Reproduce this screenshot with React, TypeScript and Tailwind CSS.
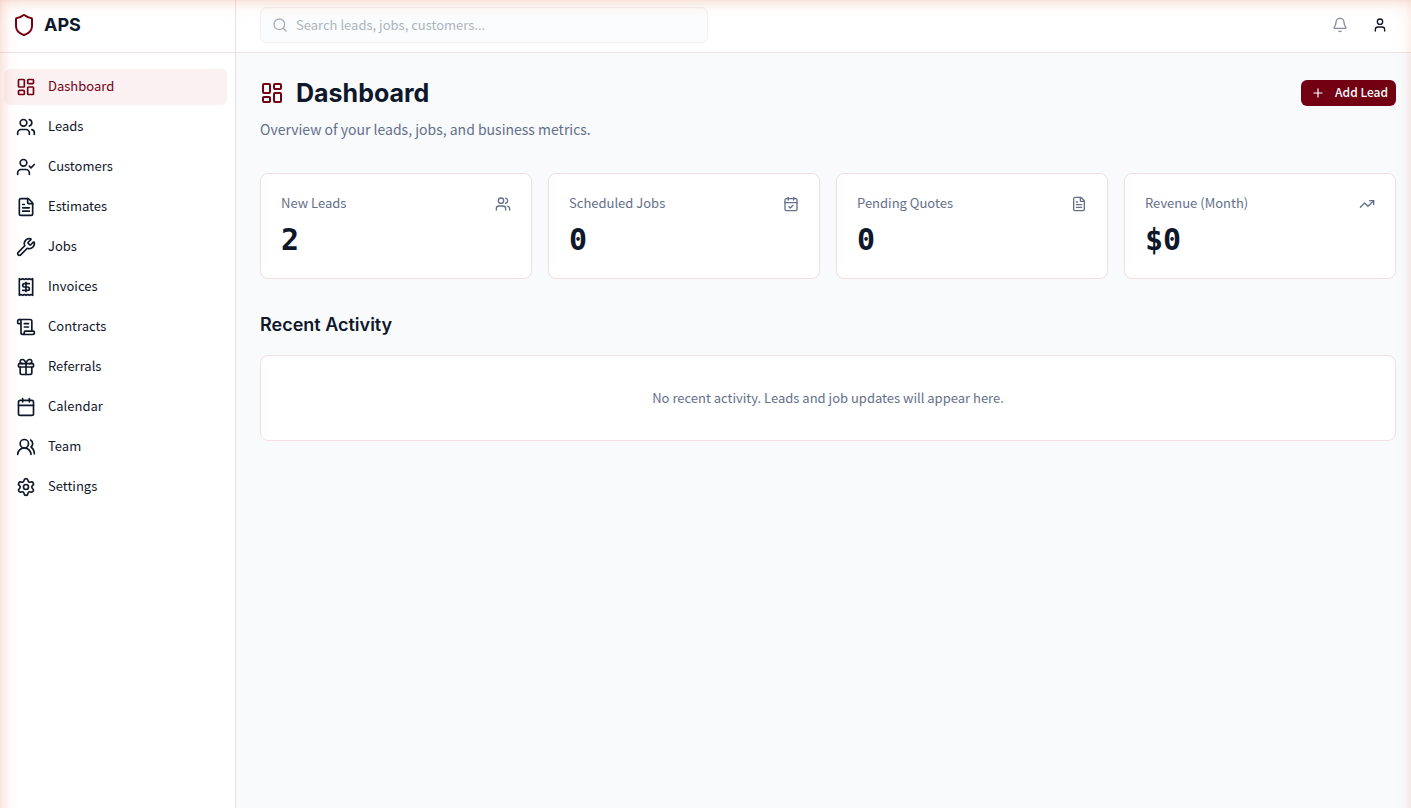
import {
  Bell,
  Calendar,
  CalendarCheck,
  FileText,
  Gift,
  LayoutDashboard,
  Plus,
  Receipt,
  ScrollText,
  Search,
  Settings,
  Shield,
  TrendingUp,
  User,
  UserCheck,
  Users,
  UsersRound,
  Wrench,
  type LucideIcon,
} from "lucide-react"
import clsx from "clsx"

type IconEntry = { label: string; icon: LucideIcon }

const navItems: IconEntry[] = [
  { label: "Dashboard", icon: LayoutDashboard },
  { label: "Leads", icon: Users },
  { label: "Customers", icon: UserCheck },
  { label: "Estimates", icon: FileText },
  { label: "Jobs", icon: Wrench },
  { label: "Invoices", icon: Receipt },
  { label: "Contracts", icon: ScrollText },
  { label: "Referrals", icon: Gift },
  { label: "Calendar", icon: Calendar },
  { label: "Team", icon: UsersRound },
  { label: "Settings", icon: Settings },
]

const stats: (IconEntry & { value: string })[] = [
  { label: "New Leads", value: "2", icon: Users },
  { label: "Scheduled Jobs", value: "0", icon: CalendarCheck },
  { label: "Pending Quotes", value: "0", icon: FileText },
  { label: "Revenue (Month)", value: "$0", icon: TrendingUp },
]

const Sidebar = () => (
  <aside className="flex w-[236px] shrink-0 flex-col border-r border-[#f0e0e2] bg-white">
    <div className="flex h-[53px] items-center gap-2 border-b border-[#f3dfe1] px-3 pb-0.5">
      <Shield className="size-6 text-[#730012]" />
      <span className="font-[Inter,sans-serif] text-lg font-bold">APS</span>
    </div>
    <nav className="flex flex-col gap-1 pt-4 pr-2 pl-1" aria-label="Main">
      {navItems.map(({ label, icon: Icon }, index) => (
        <a
          key={label}
          href="#"
          aria-current={index === 0 ? "page" : undefined}
          className={clsx(
            "flex h-9 items-center gap-3 rounded-md px-3 text-[13px] leading-5",
            index === 0 ? "bg-[#fcf1f2] text-[#730012]" : "hover:bg-slate-50",
          )}
        >
          <Icon className="size-5" />
          <span className="pb-0.5">{label}</span>
        </a>
      ))}
    </nav>
  </aside>
)

const Header = () => (
  <header className="flex h-[53px] items-center justify-between border-b border-[#f3dfe1] bg-white pr-[15px] pb-0.5 pl-6">
    <div className="flex h-9 w-full max-w-md items-center gap-2 rounded-md border border-[#f5eff2] bg-[#fbfcfd] pr-3 pl-[11px]">
      <Search className="size-4 shrink-0 text-[#a9adb9]" />
      <input
        type="text"
        aria-label="Search"
        placeholder="Search leads, jobs, customers..."
        className="h-8 w-full bg-transparent pb-0.5 text-[13px] outline-none placeholder:text-[#acb4bd]"
      />
    </div>
    <div className="flex items-center gap-2">
      <button type="button" aria-label="Notifications" className="flex size-8 items-center justify-center">
        <Bell className="size-4 text-[#868b9b]" />
      </button>
      <button type="button" aria-label="Account" className="flex size-8 items-center justify-center">
        <User className="size-4" />
      </button>
    </div>
  </header>
)

const StatCard = ({ label, value, icon: Icon }: (typeof stats)[number]) => (
  <div className="rounded-lg border border-[#f3dfe1] bg-white p-5">
    <div className="flex h-5 items-center justify-between text-[#64708a]">
      <span className="pb-0.5 text-[13px] leading-5">{label}</span>
      <Icon className="size-4" />
    </div>
    <p className="mt-2 font-['DejaVu_Sans_Mono',monospace] text-3xl font-bold">{value}</p>
  </div>
)

const App = () => (
  <div className="flex min-h-screen bg-[#f8fafc] font-['Noto_Sans_CJK_SC',sans-serif] text-[#0f172a]">
    <Sidebar />
    <div className="min-w-0 flex-1">
      <Header />
      <main className="pt-6 pr-[15px] pb-6 pl-6">
        <div className="flex items-start justify-between">
          <div>
            <h1 className="flex items-center gap-3 font-[Inter,sans-serif] text-[25px] leading-8 font-bold">
              <LayoutDashboard className="size-6 text-[#730012]" />
              Dashboard
            </h1>
            <p className="mt-2 text-sm leading-6 text-[#64708a]">
              Overview of your leads, jobs, and business metrics.
            </p>
          </div>
          <button
            type="button"
            className="mt-[3px] flex h-[26px] items-center gap-2.5 rounded-md bg-[#730012] pr-2 pl-2.5 text-xs font-medium text-white"
          >
            <Plus className="size-3.5" />
            <span className="pb-0.5">Add Lead</span>
          </button>
        </div>

        <section className="mt-8 grid grid-cols-4 gap-4" aria-label="Metrics">
          {stats.map((stat) => (
            <StatCard key={stat.label} {...stat} />
          ))}
        </section>

        <section className="mt-8">
          <h2 className="font-[Inter,sans-serif] text-lg leading-7 font-semibold">Recent Activity</h2>
          <div className="mt-4 rounded-lg border border-[#f3dfe1] bg-white p-8 text-center text-[13px] leading-5 text-[#64708a]">
            No recent activity. Leads and job updates will appear here.
          </div>
        </section>
      </main>
    </div>

    {/* warm glow around the window edge, open at the bottom */}
    <div className="pointer-events-none fixed top-0 -right-1 -bottom-8 left-0 shadow-[inset_0_0_10px_rgba(224,119,80,0.24),inset_0_0_20px_rgba(224,119,80,0.16),inset_0_0_30px_rgba(224,119,80,0.04)]" />
  </div>
)

export default App
